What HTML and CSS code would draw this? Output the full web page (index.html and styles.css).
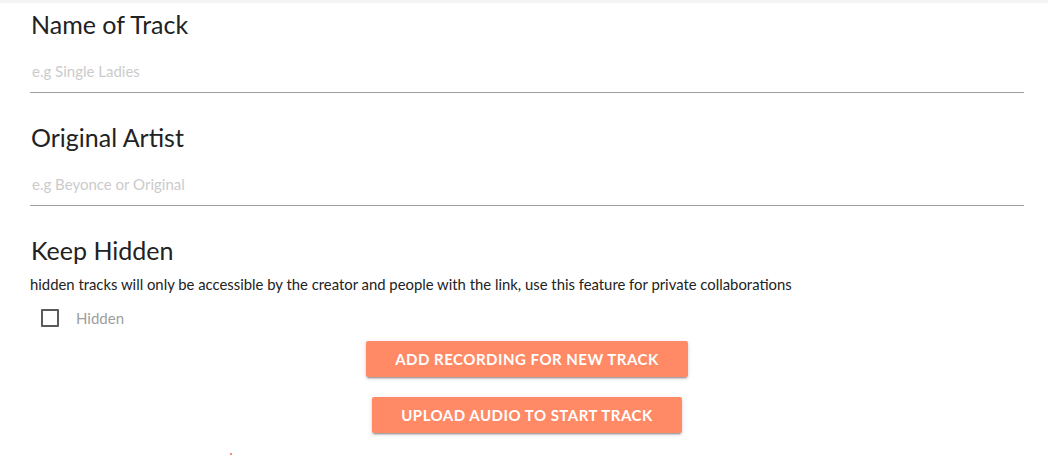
FILE: index.html
```html
<!DOCTYPE html>
<html>
<head>
<meta charset="utf-8">
<link rel="stylesheet" href="styles.css">
</head>
<body>
<div class="topbar"></div>
<form class="form">
  <div class="field">
    <h2 class="label">Name of Track</h2>
    <input class="text-input" type="text" placeholder="e.g Single Ladies">
  </div>
  <div class="field">
    <h2 class="label">Original Artist</h2>
    <input class="text-input" type="text" placeholder="e.g Beyonce or Original">
  </div>
  <div class="field hidden-field">
    <h2 class="label">Keep Hidden</h2>
    <p class="desc">hidden tracks will only be accessible by the creator and people with the link, use this feature for private collaborations</p>
    <label class="check">
      <span class="box"></span>
      <span class="check-text">Hidden</span>
    </label>
  </div>
  <div class="actions">
    <button type="button" class="btn btn-wide">ADD RECORDING FOR NEW TRACK</button>
    <button type="button" class="btn">UPLOAD AUDIO TO START TRACK</button>
  </div>
  <span class="dot"></span>
</form>
</body>
</html>
```

FILE: styles.css
```css
html, body {
  margin: 0;
  padding: 0;
  background: #fff;
}
body {
  font-family: Lato, "Noto Sans", sans-serif;
  color: #222;
  width: 1048px;
  height: 470px;
  overflow: hidden;
}
.topbar {
  height: 3px;
  background: #f4f4f4;
}
.form {
  margin: 0 24px 0 30px;
  position: relative;
}
.field {
  display: flex;
  flex-direction: column;
}
.label {
  margin: 0;
  font-weight: 400;
  font-size: 25px;
  line-height: 30px;
  padding-top: 6px;
  padding-left: 1px;
  color: #222;
}
.text-input {
  border: none;
  border-bottom: 1px solid #9e9e9e;
  outline: none;
  height: 54px;
  padding: 10px 0 0 2px;
  margin: 0 0 23px 0;
  font-family: Lato, "Noto Sans", sans-serif;
  font-size: 15px;
  background: transparent;
  box-sizing: border-box;
  width: 100%;
}
.text-input::placeholder {
  color: #cbcbcb;
}
.desc {
  margin: 10px 0 0 0;
  font-size: 14.85px;
  line-height: 18px;
  color: #222;
}
.check {
  display: flex;
  align-items: center;
  margin: 16px 0 0 11px;
  height: 18px;
}
.box {
  width: 18px;
  height: 18px;
  box-sizing: border-box;
  border: 2px solid #5a5a5a;
  border-radius: 1px;
}
.check-text {
  margin-left: 17px;
  font-size: 15px;
  color: #9e9e9e;
}
.actions {
  display: flex;
  flex-direction: column;
  align-items: center;
  gap: 20px;
  margin-top: 14px;
}
.btn {
  border: none;
  background: #ff8a65;
  color: #fff;
  font-family: Lato, "Noto Sans", sans-serif;
  font-weight: 700;
  font-size: 15px;
  letter-spacing: 0.5px;
  height: 36px;
  width: 310px;
  border-radius: 2px;
  box-shadow: 0 2px 2px 0 rgba(0,0,0,0.14), 0 1px 5px 0 rgba(0,0,0,0.12), 0 3px 1px -2px rgba(0,0,0,0.2);
}
.btn-wide {
  width: 322px;
}
.dot {
  position: absolute;
  left: 200px;
  top: 450px;
  width: 2px;
  height: 2px;
  background: #ff8a65;
}
```
